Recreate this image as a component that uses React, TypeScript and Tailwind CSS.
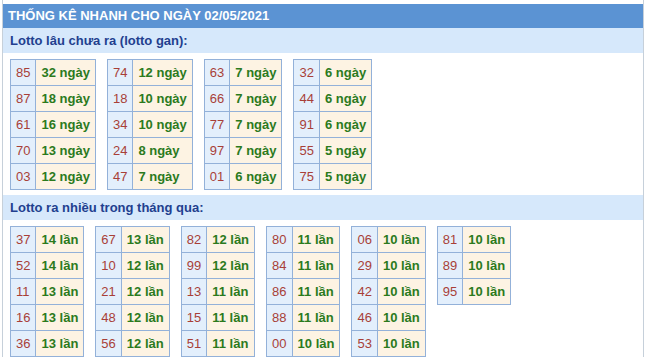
type Row = [string, string];

const gan: Row[][] = [
  [["85", "32"], ["87", "18"], ["61", "16"], ["70", "13"], ["03", "12"]],
  [["74", "12"], ["18", "10"], ["34", "10"], ["24", "8"], ["47", "7"]],
  [["63", "7"], ["66", "7"], ["77", "7"], ["97", "7"], ["01", "6"]],
  [["32", "6"], ["44", "6"], ["91", "6"], ["55", "5"], ["75", "5"]],
];

const nhieu: Row[][] = [
  [["37", "14"], ["52", "14"], ["11", "13"], ["16", "13"], ["36", "13"]],
  [["67", "13"], ["10", "12"], ["21", "12"], ["48", "12"], ["56", "12"]],
  [["82", "12"], ["99", "12"], ["13", "11"], ["15", "11"], ["51", "11"]],
  [["80", "11"], ["84", "11"], ["86", "11"], ["88", "11"], ["00", "10"]],
  [["06", "10"], ["29", "10"], ["42", "10"], ["46", "10"], ["53", "10"]],
  [["81", "10"], ["89", "10"], ["95", "10"]],
];

function LotoTable({ rows, unit }: { rows: Row[]; unit: string }) {
  return (
    <table className="border-collapse text-[13px] self-start">
      <tbody>
        {rows.map(([so, n]) => (
          <tr key={so}>
            <td className="h-[26px] border border-[#93b1d9] bg-[#e3effc] px-[5px] p-0 text-[#a83f38] align-middle">
              {so}
            </td>
            <td className="h-[26px] border border-[#93b1d9] bg-[#fdf3e3] px-[5px] p-0 font-bold text-[#2b7a1d] whitespace-nowrap align-middle">
              {n} {unit}
            </td>
          </tr>
        ))}
      </tbody>
    </table>
  );
}

function SubTitle({ children }: { children: React.ReactNode }) {
  return (
    <div className="h-[25px] leading-[25px] bg-[#d6e8fb] pl-[7px] text-[13px] font-bold text-[#223f8f]">
      {children}
    </div>
  );
}

export default function App() {
  return (
    <div className="h-[357px] w-[646px] overflow-hidden bg-white font-['Liberation_Sans',Arial,sans-serif]">
      <div className="ml-[2px] h-full w-[642px] border-x border-[#c6d0da] pt-[4px]">
        <div className="h-[24px] leading-[24px] bg-[#5b93d3] pl-[5px] text-[13px] font-bold text-white">
          THỐNG KÊ NHANH CHO NGÀY 02/05/2021
        </div>
        <SubTitle>Lotto lâu chưa ra (lotto gan):</SubTitle>
        <div className="flex gap-[11px] pl-[7px] pt-[6px] pb-[5px]">
          {gan.map((t, i) => (
            <LotoTable key={i} rows={t} unit="ngày" />
          ))}
        </div>
        <SubTitle>Lotto ra nhiều trong tháng qua:</SubTitle>
        <div className="flex gap-[11px] pl-[7px] pt-[6px]">
          {nhieu.map((t, i) => (
            <LotoTable key={i} rows={t} unit="lần" />
          ))}
        </div>
      </div>
    </div>
  );
}
